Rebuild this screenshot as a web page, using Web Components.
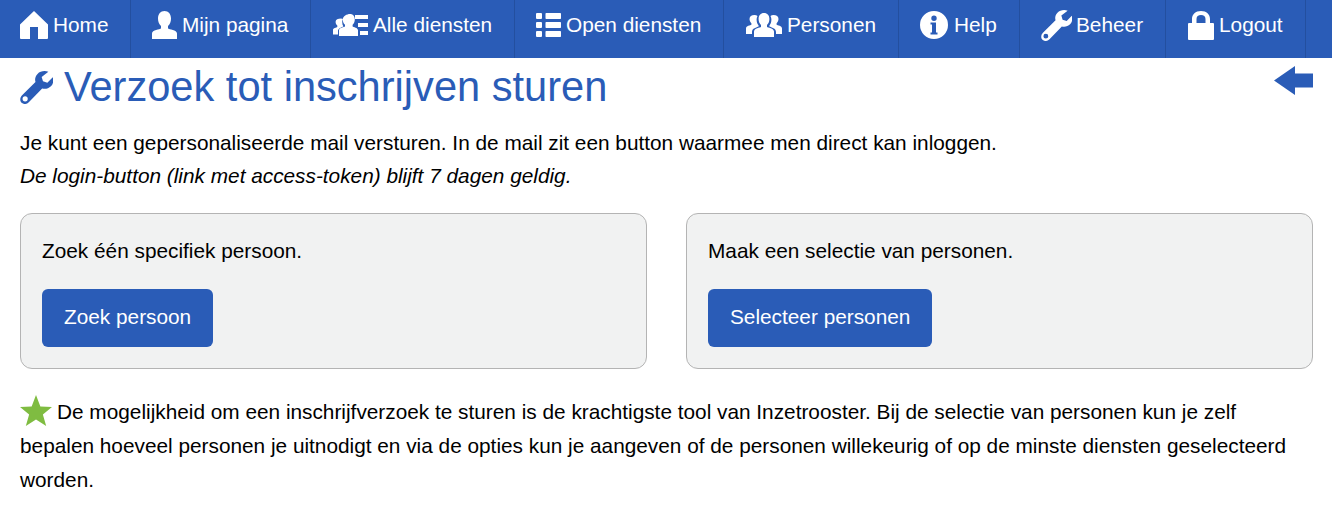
<!DOCTYPE html>
<html lang="nl">
<head>
<meta charset="utf-8">
<title>Verzoek tot inschrijven sturen</title>
<style>
  html, body { margin: 0; background: #fff; }
  body { font: 20.8px/33px "Liberation Sans", Arial, sans-serif; color: #000; height: 523px; overflow: hidden; }
  p { margin: 16px 0 0; }
  .cards { display: grid; grid-template-columns: 627px 627px; column-gap: 39px; margin-top: 21px; }
</style>
</head>
<body>
<site-nav>
  <nav-item icon="home" w="131" pad="20" gap="5">Home</nav-item>
  <nav-item icon="user" w="180" pad="21" gap="5">Mijn pagina</nav-item>
  <nav-item icon="userlist" w="204" pad="22" gap="5">Alle diensten</nav-item>
  <nav-item icon="list" w="209" pad="21" gap="5">Open diensten</nav-item>
  <nav-item icon="group" w="175" pad="22" gap="5">Personen</nav-item>
  <nav-item icon="info" w="121" pad="21" gap="6">Help</nav-item>
  <nav-item icon="wrench" w="146" pad="21" gap="4">Beheer</nav-item>
  <nav-item icon="lock" w="140" pad="22" gap="5">Logout</nav-item>
</site-nav>

<page-body>
  <page-title>Verzoek tot inschrijven sturen</page-title>
  <p>Je kunt een gepersonaliseerde mail versturen. In de mail zit een button waarmee men direct kan inloggen.<br><em>De login-button (link met access-token) blijft 7 dagen geldig.</em></p>
  <div class="cards">
    <action-card label="Zoek persoon">Zoek één specifiek persoon.</action-card>
    <action-card label="Selecteer personen">Maak een selectie van personen.</action-card>
  </div>
  <tip-text>De mogelijkheid om een inschrijfverzoek te sturen is de krachtigste tool van Inzetrooster. Bij de selectie van personen kun je zelf bepalen hoeveel personen je uitnodigt en via de opties kun je aangeven of de personen willekeurig of op de minste diensten geselecteerd worden.</tip-text>
</page-body>

<script>
'use strict';
const WRENCH = `<path fill-rule="evenodd" d="M27.500.8C24-.6 19.500.2 17 2.800c-2.200 2.200-2.800 5.200-2 7.800L2 23.500c-2.200 2.200-2.300 5.500-.4 7.300 1.900 1.800 4.900 1.600 6.900-.4L21.500 17c3 .8 6.300 0 8.500-2.200 2.300-2.300 2.800-5.800 1.800-8.800l-5.300 5.300-4.200-1.300L21 5.700z M5 24.500a2.500 2.500 0 1 1 0 5 2.500 2.500 0 0 1 0-5z"/>`;
const ICONS = {
  home: [28, 28, `<path d="M14 0 28 13.500V27a1 1 0 0 1-1 1H18V16H10V28H1a1 1 0 0 1-1-1V13.500z"/>`],
  user: [25, 28, `<path d="M12.500 0c4 0 6.500 3 6.500 7.500 0 3-1 5.500-3 7.500v2.500c1 .8 9 1.500 9 5V28H0v-5.500c0-3.500 8-4.200 9-5V15c-2-2-3-4.500-3-7.500C6 3 8.500 0 12.500 0z"/>`],
  userlist: [35, 23, `<path d="M17 0c3 0 4.800 2.200 4.800 5.400 0 2.200-.8 4-2.200 5.400v1.600c.7.600 5.400 1.200 5.400 3.800V22H6v-5.800c0-2.600 5.200-3.200 6-3.800v-1.600c-1.500-1.400-2.200-3.200-2.200-5.400C9.800 2.200 14 0 17 0z"/><path d="M8 4c.8 0 1.500.2 2 .5-.6 1-.8 2-.8 3 0 1.800.4 3.300 1.200 4.500-1.300.7-5.400 1.500-5.400 4.500V20H0v-4.500c0-2.200 3.500-2.500 4.300-3.100v-1.300C3.200 10 2.600 8.800 2.600 7.200 2.600 5 5 4 8 4z" transform="translate(0 .5)"/><rect x="22" y="1" width="13" height="4"/><rect x="25" y="9" width="10" height="4"/><rect x="27" y="17" width="8" height="4"/>`],
  list: [25, 24, `<rect width="6" height="6" rx="1"/><rect x="9.500" width="15.500" height="6" rx=".7"/><rect y="9" width="6" height="6" rx="1"/><rect x="9.500" y="9" width="15.500" height="6" rx=".7"/><rect y="18" width="6" height="6" rx="1"/><rect x="9.500" y="18" width="15.500" height="6" rx=".7"/>`],
  group: [36, 24, `<path d="M18 0c3.400 0 5.400 2.500 5.400 6 0 2.500-.9 4.600-2.400 6.100v2c.8.700 7 1.200 7 4.500V24H8v-5.400c0-3.300 6.200-3.800 7-4.500v-2c-1.500-1.500-2.400-3.600-2.400-6.100C12.600 2.500 14.600 0 18 0z"/><path d="M8.500 2c1.300 0 2.300.4 3 1-.6 1-.9 2.200-.9 3.500 0 2.500.7 4.500 2 6v1c-2 1-6.600 1.500-6.600 5.500v2H0v-5.500c0-2.700 4.500-3 5.400-3.700v-1.600C4.200 9 3.500 7.500 3.500 6 3.500 3.500 5.500 2 8.500 2z"/><path d="M27.500 2c-1.300 0-2.300.4-3 1 .6 1 .9 2.200.9 3.500 0 2.500-.7 4.500-2 6v1c2 1 6.600 1.500 6.600 5.500v2H36v-5.500c0-2.700-4.500-3-5.400-3.700v-1.600c1.200-1.200 1.900-2.700 1.900-4.200C32.500 3.500 30.500 2 27.500 2z"/>`],
  info: [28, 28, `<path fill-rule="evenodd" d="M14 0a14 14 0 1 1 0 28 14 14 0 0 1 0-28z M14 4.500a2.700 2.700 0 1 0 0 5.400 2.700 2.700 0 0 0 0-5.400z M10.500 11.500v2h1.500v8h-1.500v2h7v-2H16v-10z"/>`],
  wrench: [31, 31, WRENCH, '0 0 32 32'],
  lock: [26, 29, `<path fill-rule="evenodd" d="M13 0c5.500 0 9 3.300 9 8v4h3a1 1 0 0 1 1 1v15a1 1 0 0 1-1 1H1a1 1 0 0 1-1-1V13a1 1 0 0 1 1-1h3V8c0-4.700 3.500-8 9-8z M13 4c-2.800 0-4.500 1.600-4.500 4v4h9V8c0-2.400-1.700-4-4.500-4z"/>`]
};

class SiteNav extends HTMLElement {
  constructor() {
    super();
    this.attachShadow({ mode: 'open' }).innerHTML = `<style>
      :host { display: flex; height: 58px; background: #2a5cb7; color: #fff; }
    </style><slot></slot>`;
  }
}

class NavItem extends HTMLElement {
  constructor() {
    super();
    const [w, h, d, vb] = ICONS[this.getAttribute('icon')];
    this.attachShadow({ mode: 'open' }).innerHTML = `<style>
      :host { display: flex; box-sizing: border-box; align-items: center; height: 58px; padding: 0 0 8px ${this.getAttribute('pad')}px;
        width: ${this.getAttribute('w')}px; gap: ${this.getAttribute('gap')}px;
        border-right: 1px solid #234f9f; font-size: 20.8px; line-height: 24px; white-space: nowrap; cursor: pointer; }
      svg { fill: #fff; flex: none; }
    </style><svg width="${w}" height="${h}" viewBox="${vb || `0 0 ${w} ${h}`}">${d}</svg><slot></slot>`;
  }
}

class PageBody extends HTMLElement {
  constructor() {
    super();
    this.attachShadow({ mode: 'open' }).innerHTML = `<style>
      :host { display: block; padding: 0 19px 0 20px; }
    </style><slot></slot>`;
  }
}

class PageTitle extends HTMLElement {
  constructor() {
    super();
    this.attachShadow({ mode: 'open' }).innerHTML = `<style>
      :host { display: block; position: relative; color: #2a5cb7; padding-top: 6px; height: 46px; }
      h1 { margin: 0; font-weight: 400; font-size: 41.6px; line-height: 46px; display: flex; align-items: center; gap: 11px; }
      h1 svg { fill: #2a5cb7; flex: none; width: 33px; height: 33px; }
      .back { position: absolute; right: 0; top: 8px; fill: #2a5cb7; }
    </style><h1><svg viewBox="0 0 32 32">${WRENCH}</svg><span><slot></slot></span></h1>
    <svg class="back" width="39" height="29" viewBox="0 0 39 29"><path d="M0 14.500 21 0V7.500H39V21.500H21V29z"/></svg>`;
  }
}

class ActionCard extends HTMLElement {
  constructor() {
    super();
    this.attachShadow({ mode: 'open' }).innerHTML = `<style>
      :host { display: block; box-sizing: border-box; height: 156px; padding: 20px 21px 21px; background: #f1f2f2; border: 1px solid #b4b4b4; border-radius: 12px; }
      p { margin: 0 0 22px; line-height: 33px; }
      button { display: block; height: 58px; padding: 0 22px 4px; border: 0; border-radius: 6px; background: #2a5cb7; color: #fff; font: inherit; cursor: pointer; }
    </style><p><slot></slot></p><button>${this.getAttribute('label')}</button>`;
  }
}

class TipText extends HTMLElement {
  constructor() {
    super();
    this.attachShadow({ mode: 'open' }).innerHTML = `<style>
      :host { display: block; margin-top: 26px; line-height: 34px; }
      svg { width: 32px; height: 31px; vertical-align: -7px; margin-right: 5px; fill: #7fbc41; }
    </style><svg viewBox="0 0 33 32"><path d="M16.500 0 21 11.800 33 12.300 23.600 20 27 32 16.500 25.200 6 32 9.400 20 0 12.300 12 11.800z"/></svg><slot></slot>`;
  }
}

customElements.define('site-nav', SiteNav);
customElements.define('nav-item', NavItem);
customElements.define('page-body', PageBody);
customElements.define('page-title', PageTitle);
customElements.define('action-card', ActionCard);
customElements.define('tip-text', TipText);
</script>
</body>
</html>
